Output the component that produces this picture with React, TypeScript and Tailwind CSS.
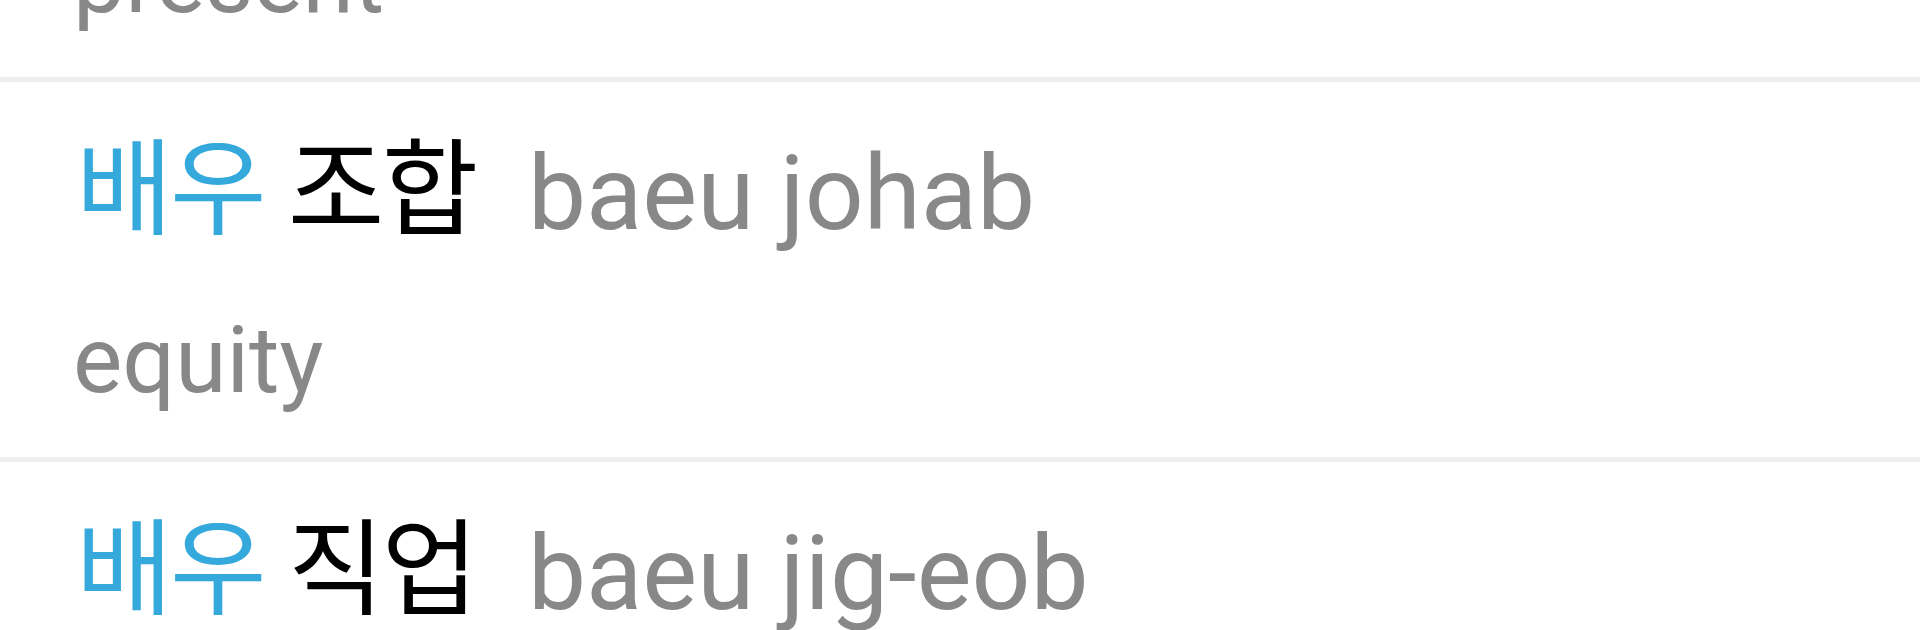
import React from "react";

type Entry = { a: string; b: string; roman: string; meaning: string };

const entries: Entry[] = [
  { a: "배우", b: "조합", roman: "baeu johab", meaning: "equity" },
  { a: "배우", b: "직업", roman: "baeu jig-eob", meaning: "acting" },
];

function Divider() {
  return <div className="h-[5px] w-full bg-[#eeeeee]" />;
}

function Row({ e }: { e: Entry }) {
  return (
    <div className="pl-[76px] pt-[44px] pb-[26px]">
      <div className="flex h-[136px] items-baseline whitespace-nowrap leading-[136px]">
        <span className="relative -top-[3px] text-[105px] tracking-[-2.5px]">
          <span className="text-[#35a9dc]">{e.a}</span>{" "}
          <span className="text-black">{e.b}</span>
        </span>
        <span className="ml-[52px] text-[103.5px] text-[#888888]">{e.roman}</span>
      </div>
      <div className="mt-[29px] h-[140px] whitespace-nowrap text-[93px] leading-[140px] text-[#888888]">
        <span className="-ml-[3px]">{e.meaning}</span>
      </div>
    </div>
  );
}

export default function App() {
  return (
    <div className="h-[630px] w-[1920px] overflow-hidden bg-white font-[family-name:Roboto,'Noto_Sans_CJK_KR',sans-serif]">
      <div className="-mt-[89px] pl-[76px] pb-[26px]">
        <div className="h-[140px] whitespace-nowrap text-[93px] leading-[140px] text-[#888888]">
          <span className="-ml-[3px]">present</span>
        </div>
      </div>
      <Divider />
      {entries.map((e, i) => (
        <React.Fragment key={i}>
          <Row e={e} />
          <Divider />
        </React.Fragment>
      ))}
    </div>
  );
}
